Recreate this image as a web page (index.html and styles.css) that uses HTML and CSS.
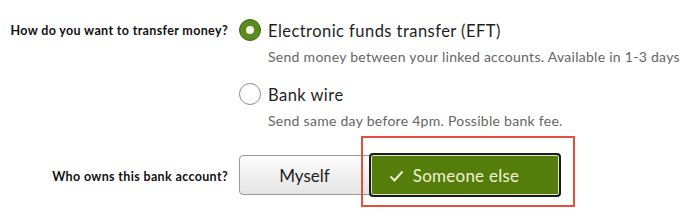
FILE: index.html
```html
<!DOCTYPE html>
<html lang="en">
<head>
    <meta charset="UTF-8">
    <title>Transfer money</title>
    <link rel="stylesheet" href="styles.css">
</head>
<body>

<div class="form">
    <div class="field-label first">How do you want to transfer money?</div>
    <div class="options">
        <div class="option">
            <span class="radio checked"></span>
            <div>
                <div class="opt-title">Electronic funds transfer (EFT)</div>
                <div class="opt-desc">Send money between your linked accounts. Available in 1-3 days</div>
            </div>
        </div>
        <div class="option">
            <span class="radio"></span>
            <div>
                <div class="opt-title">Bank wire</div>
                <div class="opt-desc">Send same day before 4pm. Possible bank fee.</div>
            </div>
        </div>
    </div>

    <div class="field-label owner">Who owns this bank account?</div>
    <div class="choice-group">
        <button class="choice">Myself</button>
        <div class="highlight">
            <button class="choice selected">
                <svg width="15" height="12" viewBox="0 0 15 12"><path d="M1.5 6.5 L5.5 10.5 L13.5 1.5" fill="none" stroke="currentColor" stroke-width="2"/></svg>
                Someone else
            </button>
            <div class="highlight-box"></div>
        </div>
    </div>
</div>

</body>
</html>
```

FILE: styles.css
```css
body { margin: 0; background: #fff; font-family: Lato, "Open Sans", sans-serif; color: #222; }
.form { display: grid; grid-template-columns: 228px auto; column-gap: 11px; row-gap: 20px; padding: 20px 0 21px; }

.field-label { font-weight: bold; font-size: 12.5px; letter-spacing: 0.35px; text-align: right; line-height: 22px; color: #111; }
.field-label.first { align-self: start; }
.field-label.owner { align-self: center; padding-top: 4px; }

.option { display: flex; gap: 7px; margin-bottom: 15px; }
.option:last-child { margin-bottom: 0; }
.radio { width: 22px; height: 22px; box-sizing: border-box; border: 1px solid #8c8c8c; border-radius: 50%; background: #fff; flex-shrink: 0; margin-top: -1px; position: relative; }
.radio.checked { background: #5b8a1f; border-color: #3f6514; }
.radio.checked::after { content: ""; position: absolute; left: 6px; top: 6px; width: 8px; height: 8px; border-radius: 50%; background: #f4f6ee; }
.opt-title { font-size: 16.5px; letter-spacing: 0.45px; line-height: 22px; color: #1e1e1e; }
.opt-desc { font-size: 14px; letter-spacing: 0.28px; line-height: 24px; margin-top: 3px; color: #666; }

.choice-group { display: flex; align-items: center; }
.choice { font-family: inherit; font-size: 17px; cursor: pointer; }
.choice:first-child { width: 131px; height: 40px; border: 1px solid #9a9a9a; border-radius: 4px 0 0 4px; background: linear-gradient(#fdfdfd, #e4e4e4); color: #222; }
.highlight { position: relative; margin-left: -1px; }
.choice.selected { width: 192px; height: 44px; border: 2px solid #1c1c1c; border-radius: 4px; background: #547d0b; box-shadow: inset 0 0 0 1px #dfe7c9; color: #eef3d3; letter-spacing: 0.25px; display: flex; align-items: center; justify-content: center; gap: 9px; padding: 0 22px 0 0; }
.choice.selected svg { margin-top: 2px; }
.highlight-box { position: absolute; left: -8px; top: -17px; right: -14px; bottom: -10px; border: 2px solid #e5503c; pointer-events: none; }
```
